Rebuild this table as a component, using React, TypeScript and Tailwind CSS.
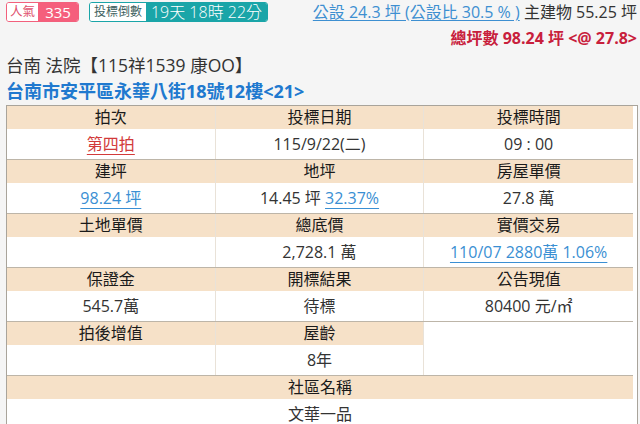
import React from "react";

const FONT = "font-['Open_Sans','Noto_Sans_CJK_TC',sans-serif]";

type Cell = { head: string; body?: React.ReactNode };

const LINK = "text-[#3a8fd3] underline decoration-[#3a8fd3] underline-offset-4";

const ROWS: Cell[][] = [
  [
    { head: "拍次", body: <a className="text-[#d23a3a] underline decoration-[#d23a3a] underline-offset-4">第四拍</a> },
    { head: "投標日期", body: "115/9/22(二)" },
    { head: "投標時間", body: "09 : 00" },
  ],
  [
    { head: "建坪", body: <a className={LINK}>98.24 坪</a> },
    {
      head: "地坪",
      body: (
        <span>
          14.45 坪 <a className={LINK}>32.37%</a>
        </span>
      ),
    },
    { head: "房屋單價", body: "27.8 萬" },
  ],
  [
    { head: "土地單價", body: "" },
    { head: "總底價", body: "2,728.1 萬" },
    { head: "實價交易", body: <a className={LINK}>110/07 2880萬 1.06%</a> },
  ],
  [
    { head: "保證金", body: "545.7萬" },
    { head: "開標結果", body: "待標" },
    { head: "公告現值", body: "80400 元/㎡" },
  ],
];

const HEAD = "h-[23px] bg-[#f6e1c8] flex items-center justify-center text-[16px] text-[#1a1a1a]";
const BODY = "h-[30px] bg-white flex items-center justify-center text-[16px] text-[#333]";

function Pair({ cells }: { cells: Cell[] }) {
  return (
    <div className="grid grid-cols-3 border-b border-[#bdb5a8]">
      {cells.map((c, i) => (
        <div key={i} className={i < 2 ? "border-r border-[#e9e2d8]" : ""}>
          <div className={HEAD}>{c.head}</div>
          <div className={BODY}>{c.body}</div>
        </div>
      ))}
    </div>
  );
}

export default function App() {
  return (
    <div className={`w-[640px] h-[424px] overflow-hidden bg-[#f5f5f5] ${FONT} leading-none`}>
      {/* top line */}
      <div className="flex items-start justify-between pl-[6px] pr-[3px] pt-[2px]">
        <div className="flex items-center gap-[10px]">
          <div className="flex h-[20px] rounded-[3px] overflow-hidden border border-[#f2607c]">
            <span className="w-[31px] bg-white text-[#e0506c] text-[12.5px] flex items-center justify-center">人氣</span>
            <span className="w-[40px] bg-[#f55f7c] text-white text-[15px] flex items-center justify-center">335</span>
          </div>
          <div className="flex h-[20px] rounded-[3px] overflow-hidden border border-[#1aa5a8]">
            <span className="w-[56px] bg-white text-[#3d5f60] text-[12px] flex items-center justify-center">投標倒數</span>
            <span className="w-[121px] bg-[#1aa5a8] text-white text-[16px] font-light flex items-center justify-center">19天 18時 22分</span>
          </div>
        </div>
        <div className="flex flex-col items-end gap-[10px] pt-[2px]">
          <div className="text-[16px] text-[#333] whitespace-nowrap">
            <a className="text-[#3d8fd1] underline decoration-[#3d8fd1] underline-offset-2">公設 24.3 坪 (公設比 30.5 % )</a> 主建物 55.25 坪
          </div>
          <div className="text-[16px] font-bold text-[#c8203c] whitespace-nowrap">總坪數 98.24 坪 &lt;@ 27.8&gt;</div>
        </div>
      </div>

      <div className="pl-[6px] pt-[11px] text-[17.5px] text-[#333]">台南 法院【115祥1539 康OO】</div>
      <div className="pl-[6px] pt-[7px] text-[18px] font-bold text-[#2079cf]">台南市安平區永華八街18號12樓&lt;21&gt;</div>

      <div className="mt-[5px] ml-[6px] w-[632px] border-l border-t border-r border-[#a9a49b] bg-white pr-[4px]">
        {ROWS.map((r, i) => (
          <Pair key={i} cells={r} />
        ))}
        <div className="grid grid-cols-3 border-b border-[#bdb5a8]">
          <div className="border-r border-[#e9e2d8]">
            <div className={HEAD}>拍後增值</div>
            <div className="h-[30px] bg-white"></div>
          </div>
          <div className="border-r border-[#e9e2d8]">
            <div className={HEAD}>屋齡</div>
            <div className={BODY}>8年</div>
          </div>
          <div className="bg-white"></div>
        </div>
        <div className={HEAD}>社區名稱</div>
        <div className={BODY}>文華一品</div>
      </div>
    </div>
  );
}
